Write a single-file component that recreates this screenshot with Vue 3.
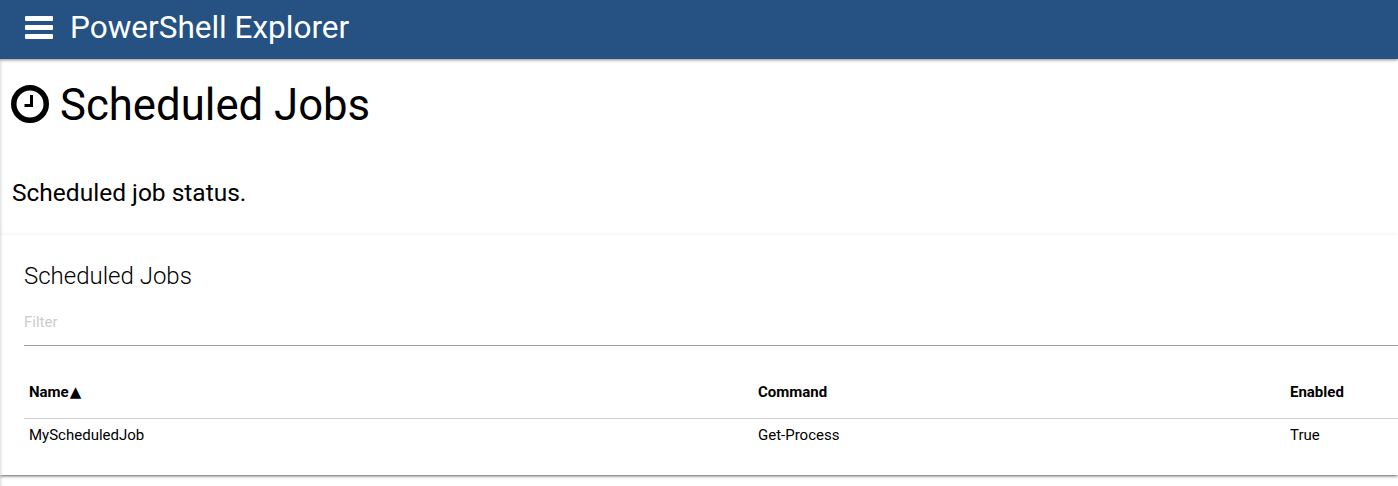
<script setup>
const columns = ["Name", "Command", "Enabled"];
const jobs = [{ name: "MyScheduledJob", command: "Get-Process", enabled: "True" }];
</script>

<template>
  <div class="page">
    <header class="topbar">
      <svg class="menu" viewBox="0 0 28 23" width="28" height="23">
        <rect x="0" y="0" width="28" height="5" rx="1" />
        <rect x="0" y="9" width="28" height="5" rx="1" />
        <rect x="0" y="18" width="28" height="5" rx="1" />
      </svg>
      <span class="brand">PowerShell Explorer</span>
    </header>
    <main class="content">
      <h1 class="title">
        <svg class="clock" viewBox="0 0 38 38" width="38" height="38">
          <circle cx="19" cy="19" r="16.25" fill="none" stroke="#000" stroke-width="5.5" />
          <path d="M20.5 10v10.5h-7" fill="none" stroke="#000" stroke-width="3" />
        </svg>
        <span class="title-text">Scheduled Jobs</span>
      </h1>
      <p class="lead">Scheduled job status.</p>
      <section class="card">
        <h2 class="card-title">Scheduled Jobs</h2>
        <div class="filter">Filter</div>
        <table class="grid">
          <thead>
            <tr>
              <th v-for="(col, i) in columns" :key="col">
                {{ col }}<span v-if="i === 0" class="sort">▲</span>
              </th>
            </tr>
          </thead>
          <tbody>
            <tr v-for="job in jobs" :key="job.name">
              <td>{{ job.name }}</td>
              <td>{{ job.command }}</td>
              <td>{{ job.enabled }}</td>
            </tr>
          </tbody>
        </table>
      </section>
    </main>
  </div>
</template>

<style>
html, body {
  margin: 0;
  background: #fff;
  overflow: hidden;
}
</style>

<style scoped>
.page {
  width: 1398px;
  height: 486px;
  overflow: hidden;
  font-family: Roboto, sans-serif;
  color: #000;
}

.topbar {
  height: 59px;
  background: #255282;
  box-shadow: 0 1px 3px rgba(0, 0, 0, 0.45);
  display: flex;
  align-items: center;
  padding: 0 0 4px 25px;
  box-sizing: border-box;
  color: #fff;
  position: relative;
  z-index: 1;
}

.menu {
  fill: #fff;
  margin-right: 17px;
}

.brand {
  font-size: 31.5px;
}

.content {
  padding-top: 1px;
  height: 427px;
  box-sizing: border-box;
  box-shadow: inset 3px 0 3px -2px rgba(0, 0, 0, 0.16);
}

.title {
  margin: 0;
  height: 88px;
  padding-left: 11px;
  display: flex;
  align-items: center;
  gap: 11px;
  font-size: 43.7px;
  font-weight: 400;
}

.title-text {
  padding-top: 2px;
}

.lead {
  margin: 0;
  padding: 26px 0 0 12px;
  height: 68px;
  box-sizing: border-box;
  font-size: 24.5px;
  line-height: 38px;
}

.card {
  margin-top: 19px;
  padding: 25px 0 27px 24px;
  height: 240px;
  box-sizing: border-box;
  box-shadow: 0 2px 2px 0 rgba(0, 0, 0, 0.24), 0 3px 1px -2px rgba(0, 0, 0, 0.2), 0 1px 5px 0 rgba(0, 0, 0, 0.12);
}

.card-title {
  margin: 0;
  font-size: 24px;
  font-weight: 300;
  line-height: 32px;
}

.filter {
  margin-top: 14px;
  height: 40px;
  line-height: 32px;
  font-size: 15px;
  color: #ccc;
  border-bottom: 1px solid #9e9e9e;
  box-sizing: border-box;
}

.grid {
  width: 1374px;
  margin-top: 20px;
  border-collapse: collapse;
  table-layout: fixed;
  font-size: 15px;
}

.grid th {
  text-align: left;
  height: 52px;
  padding: 0 5px;
  font-weight: 700;
  border-bottom: 1px solid #d0d0d0;
}

.grid td {
  height: 32px;
  padding: 0 5px;
}

.grid th:nth-child(1) { width: 719px; }
.grid th:nth-child(2) { width: 522px; }

.sort {
  margin-left: 1px;
  font-family: "DejaVu Sans", sans-serif;
  font-size: 15px;
}
</style>
